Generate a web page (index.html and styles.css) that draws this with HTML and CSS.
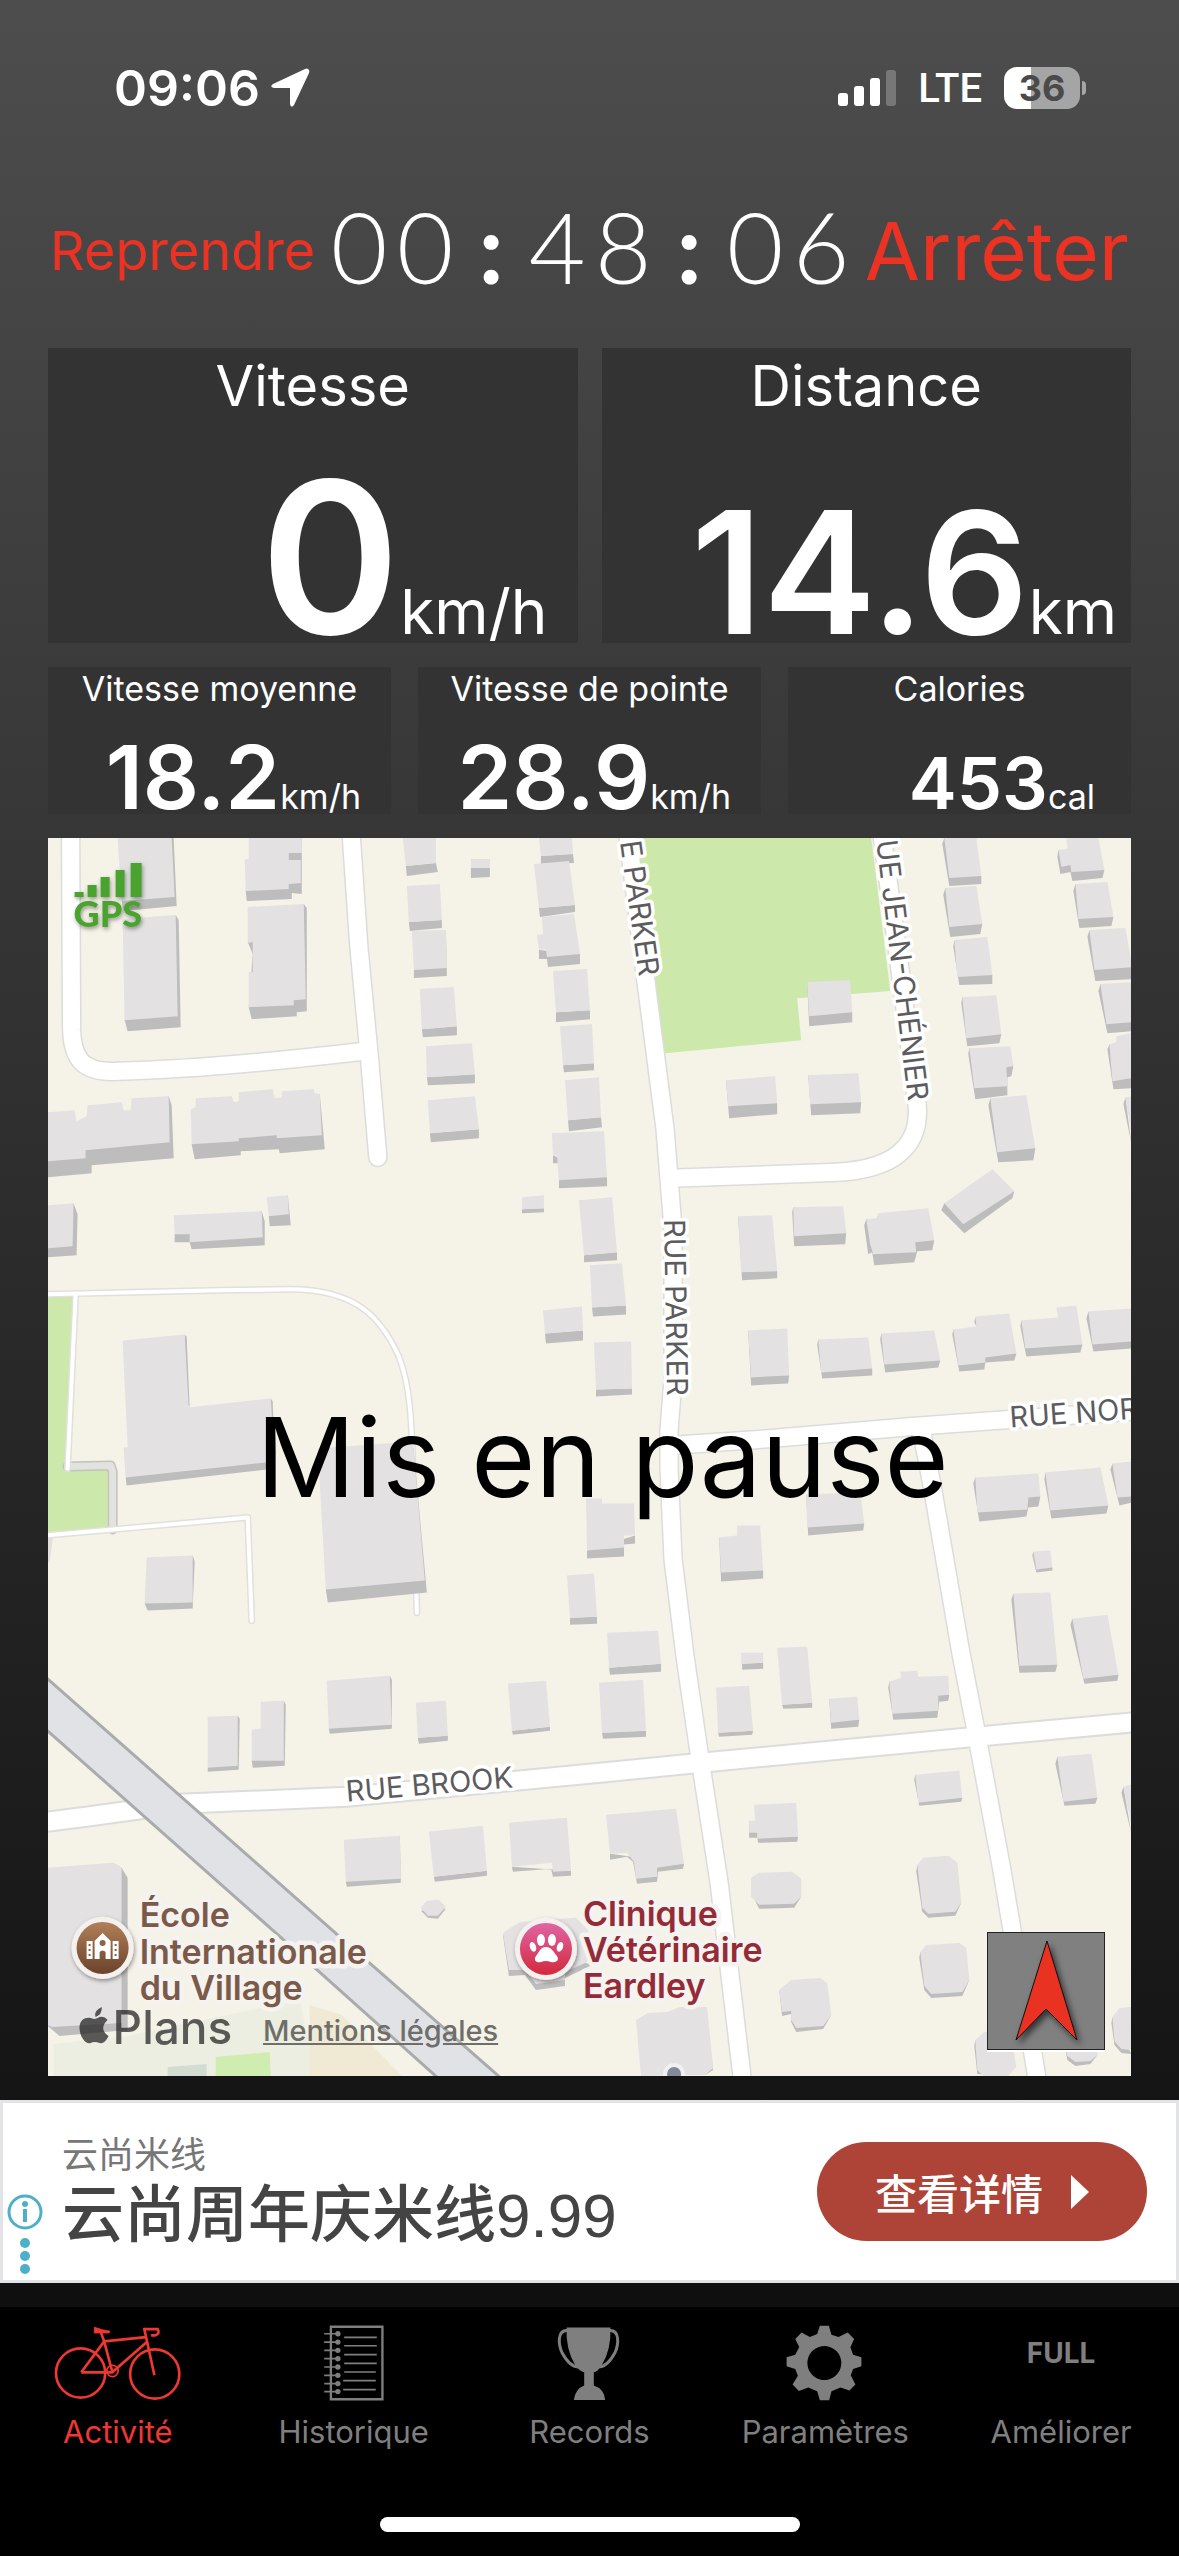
FILE: index.html
```html
<!DOCTYPE html>
<html lang="fr">
<head>
    <meta charset="UTF-8">
    <meta name="viewport" content="width=device-width, initial-scale=1.0">
    <title>Activité</title>
    <link rel="stylesheet" href="styles.css">
</head>
<body>
    <header class="status-bar">
        <div class="status-left">
            <span class="clock">09:06</span>
            <svg class="location" viewBox="0 0 40 40"><path d="M38 1 Q40 2 39 5 L24 37 Q21 41 20 36 L20 20 L4 20 Q-1 19 3 16 L35 1 Q37 0 38 1Z" fill="#fff"/></svg>
        </div>
        <div class="status-right">
            <svg class="signal" viewBox="0 0 58 38"><g fill="#fff"><rect x="0" y="24" width="10" height="13" rx="3"/><rect x="16" y="17" width="10" height="20" rx="3"/><rect x="32" y="9" width="10" height="28" rx="3"/><rect x="48" y="1" width="10" height="36" rx="3" fill="#777"/></g></svg>
            <span class="network">LTE</span>
            <div class="battery"><span>36</span></div>
        </div>
    </header>

    <div class="timer-bar">
        <button class="resume">Reprendre</button>
        <div class="timer"><span>0</span><span>0</span><span class="colon">:</span><span>4</span><span>8</span><span class="colon">:</span><span>0</span><span>6</span></div>
        <button class="stop">Arrêter</button>
    </div>

    <main class="content">
        <div class="cards main-cards">
            <section class="card speed">
                <h2>Vitesse</h2>
                <p><strong>0</strong><span>km/h</span></p>
            </section>
            <section class="card distance">
                <h2>Distance</h2>
                <p><strong>14.6</strong><span>km</span></p>
            </section>
        </div>
        <div class="cards small-cards">
            <section class="card">
                <h2>Vitesse moyenne</h2>
                <p><strong>18.2</strong><span>km/h</span></p>
            </section>
            <section class="card">
                <h2>Vitesse de pointe</h2>
                <p><strong>28.9</strong><span>km/h</span></p>
            </section>
            <section class="card calories">
                <h2>Calories</h2>
                <p><strong>453</strong><span>cal</span></p>
            </section>
        </div>

        <div class="map">
            <svg class="map-canvas" viewBox="48 839 1083 1237" preserveAspectRatio="xMidYMid slice">
                <defs>
                    <linearGradient id="school" x2="0" y2="1"><stop stop-color="#b08058"/><stop offset="1" stop-color="#6b432b"/></linearGradient>
                    <linearGradient id="vet" x2="0" y2="1"><stop stop-color="#e065a5"/><stop offset="1" stop-color="#d3293d"/></linearGradient>
                    <filter id="shadow" x="-30%" y="-30%" width="170%" height="170%"><feDropShadow dx="3" dy="4" stdDeviation="3" flood-opacity="0.6"/></filter>
                    <filter id="soft" x="-30%" y="-30%" width="160%" height="160%"><feDropShadow dx="1" dy="2" stdDeviation="2" flood-opacity="0.4"/></filter>
                </defs>
                <rect x="48" y="839" width="1083" height="1237" fill="#f5f2e8"/>

                <!-- parks and ground -->
                <g fill="#cce8aa">
                    <path d="M636 839H871L890 992 797 999 801 1041 665 1054Z"/>
                    <path d="M48 1295H75L67 1470H108V1530L48 1533Z"/>
                </g>
                <path d="M54 2044L128 2036 300 2000 316 2076H54Z" fill="#edeee2"/>
                <path d="M310 2005L342 2015 402 2076H310Z" fill="#f0ead4"/>
                <path d="M216 2057L270 2052 271 2076H216Z" fill="#cfedb0"/>
                <path d="M168 2067L207 2064V2076H168Z" fill="#d3dcd0"/>

                <!-- paths -->
                <g fill="none" stroke-linejoin="round" stroke-linecap="round">
                    <path d="M68 1467L111 1466 113 1472V1530" stroke="#c3c2bd" stroke-width="10"/>
                    <path d="M68 1467L111 1466 113 1472V1530" stroke="#e2e2de" stroke-width="7"/>
                    <g stroke="#e1e0dc" stroke-width="7">
                        <path d="M44 1295L220 1291 290 1290C360 1290 383 1322 399 1357C412 1390 412 1430 414 1500L417 1613"/>
                        <path d="M76 1296L68 1469"/>
                        <path d="M44 1536L248 1518 252 1621M50 1536L47 1560"/>
                    </g>
                    <g stroke="#fff" stroke-width="4">
                        <path d="M44 1295L220 1291 290 1290C360 1290 383 1322 399 1357C412 1390 412 1430 414 1500L417 1613"/>
                        <path d="M76 1296L68 1469"/>
                        <path d="M44 1536L248 1518 252 1621"/>
                    </g>
                </g>

                <!-- streets -->
                <g fill="none" stroke="#dcdcda" stroke-width="20">
                    <path d="M71 830L72 1030C73 1062 85 1074 119 1072Q210 1070 365 1052"/>
                    <path d="M351 830L359 947 370 1063 378 1158" stroke-linecap="round"/>
                    <path d="M627 830L646 983 665 1130 673 1230V1380L669 1430V1470L673 1560 685 1657 699 1753 719 1883 743 2086"/>
                    <path d="M881 830L901 980 917 1107C920 1150 890 1170 837 1173L670 1179"/>
                    <path d="M669 1446L759 1440 912 1427 1009 1420 1140 1411"/>
                    <path d="M921 1430L932 1487 960 1650 975 1728 1001 1867 1038 2086"/>
                    <path d="M40 1823L94 1816 180 1804 347 1797 600 1773 701 1763 976 1737 1140 1722" stroke-width="22"/>
                </g>
                <g fill="none" stroke="#fff" stroke-width="17">
                    <path d="M71 830L72 1030C73 1062 85 1074 119 1072Q210 1070 365 1052"/>
                    <path d="M351 830L359 947 370 1063 378 1158" stroke-linecap="round"/>
                    <path d="M627 830L646 983 665 1130 673 1230V1380L669 1430V1470L673 1560 685 1657 699 1753 719 1883 743 2086"/>
                    <path d="M881 830L901 980 917 1107C920 1150 890 1170 837 1173L670 1179"/>
                    <path d="M669 1446L759 1440 912 1427 1009 1420 1140 1411"/>
                    <path d="M921 1430L932 1487 960 1650 975 1728 1001 1867 1038 2086"/>
                    <path d="M40 1823L94 1816 180 1804 347 1797 600 1773 701 1763 976 1737 1140 1722" stroke-width="18"/>
                </g>
                <path d="M40 1672L340 1937 510 2086H447L276 1933 40 1724Z" fill="#e0e2e6" stroke="#aaabac" stroke-width="3"/>

                <!-- building walls -->
                <g fill="#bebdbd">
                    <path d="M172 839H174L177 907 124 912 122 902Z"/>
                    <path d="M176 916L179 921 181 1028 128 1032 125 1021Z"/>
                    <path d="M302 839V895L292 894V900L247 902 246 892 289 839Z"/>
                    <path d="M304 905L307 909V1012L297 1013V1017L252 1020 249 1008 253 955 248 943Z"/>
                    <path d="M436 864L438 873 407 877 406 867Z M471 869H490V878L471 879Z M442 921V929L410 932 409 923Z M446 931L447 977 414 979V971Z M457 1027V1036L423 1038 422 1030Z M475 1075V1084L428 1086 427 1078Z M479 1130V1139L431 1143 430 1134Z"/>
                    <path d="M573 855L574 864 541 865V857Z M575 906V913L540 918 539 909Z M580 955V965L548 968 547 960H539V951Z M590 1011V1020L556 1023V1013Z M594 1064V1071L564 1073 563 1066Z M601 1118L602 1128 569 1132 568 1121Z M607 1178V1187L559 1189V1164H553V1156Z M544 1209V1213L522 1214V1210Z M617 1253V1261L584 1263V1256Z"/>
                    <path d="M169 1097L172 1106 174 1159 92 1166V1174L48 1178V1162Z M320 1095L325 1150 280 1154 279 1150 241 1152V1156L195 1160 192 1145Z M74 1204L78 1215 77 1256 48 1258V1249Z M262 1212L265 1222V1246L192 1250 190 1243H175V1235Z M288 1196L291 1226 270 1227 269 1217Z"/>
                    <path d="M807 983L809 1027 852 1023V1013Z M726 1081L729 1119 777 1115V1104Z M808 1076L811 1116 860 1114 861 1103Z"/>
                    <path d="M944 839L942 845 949 887 981 885V877Z M945 889L943 896 950 938 980 935 982 925Z M954 941L953 948 959 986 992 985V976Z M962 998L961 1004 967 1047 999 1044 1001 1035Z M969 1049L968 1055 975 1100 1007 1096V1078L1011 1077 1013 1067Z M990 1099L988 1106 998 1163 1033 1161 1035 1149Z"/>
                    <path d="M1058 851L1057 858 1060 875 1070 873 1072 882 1102 879 1104 871Z M1075 885L1073 892 1079 929 1111 927 1113 918Z M1089 931L1087 938 1095 982 1131 980V968Z M1100 985L1098 992 1107 1034 1131 1032V1023Z M1109 1045L1107 1050 1113 1090 1131 1089V1079Z M1125 1098L1123 1105 1131 1145Z"/>
                    <path d="M944 1204L941 1211 964 1234 1012 1199 1014 1192Z M738 1217L742 1281 777 1279V1272Z M793 1208L792 1213 794 1247 845 1245 846 1234Z M866 1220L864 1226 868 1255 872 1253 874 1266 914 1263 917 1252 932 1251 934 1241Z"/>
                    <path d="M626 1306V1315L593 1317 592 1308Z M583 1331V1341L546 1344 545 1334Z M632 1389V1395L596 1397V1390Z M748 1331L751 1386 788 1384 789 1376Z M818 1340L817 1345 822 1379 872 1376V1369Z M881 1334L880 1340 885 1373 938 1368 940 1361Z M953 1330L952 1335 959 1372 984 1370 985 1363 1014 1361 1016 1354Z M975 1317L974 1323 978 1330Z M1021 1321L1020 1327 1026 1357 1080 1353 1082 1345Z M1088 1312L1086 1319 1093 1352 1131 1349V1342Z"/>
                    <path d="M975 1478L973 1484 979 1522 1026 1517 1028 1508 1038 1507 1040 1497Z M1045 1473L1044 1480 1051 1519 1106 1514 1108 1506Z M1112 1464L1110 1470 1119 1506 1131 1503V1497Z M806 1495L808 1536 863 1531 864 1524Z M719 1538L721 1582 763 1579V1571Z M635 1536V1544L624 1545V1557L587 1559V1551Z M597 1617V1624L570 1625V1618Z M1033 1552L1032 1556 1036 1573 1052 1571V1568Z M1013 1594L1011 1600 1019 1673 1055 1672 1057 1665Z M1072 1619L1070 1625 1084 1684 1117 1681 1118 1675Z M661 1664V1672L610 1675 609 1668Z M763 1663V1669L742 1670V1664Z M812 1703V1708L783 1709 782 1705Z"/>
                    <path d="M646 1731V1737L603 1739 602 1733Z M753 1731L752 1735 719 1737 718 1733Z M829 1699L831 1729 858 1727 859 1720Z M889 1682L888 1688 893 1720 937 1718 939 1702 948 1701 949 1695Z M915 1775L914 1780 919 1806 961 1802 962 1798Z M1057 1757L1055 1764 1064 1806 1095 1804 1097 1798Z M1123 1787L1121 1793 1131 1834Z M749 1821V1838H757L758 1843 797 1842 798 1837Z M684 1864L683 1869 658 1872 657 1882 637 1884 633 1862 627 1857 610 1860V1854Z"/>
                    <path d="M751 1893L759 1909 794 1908 801 1897Z M917 1865L916 1872 922 1912 928 1918 955 1916 961 1903Z M920 1952L919 1958 924 1990 931 1998 962 1996 969 1980Z M779 1990L782 2016 791 2014V2022L796 2032 823 2029 831 2015Z M975 2040L974 2046 977 2074 1008 2076Z M1065 2050L1067 2060 1075 2066 1090 2064 1097 2055Z M1112 2017L1111 2023 1114 2045 1121 2053 1131 2054Z"/>
                    <path d="M185 1335L187 1337 190 1408 186 1400Z M271 1399L273 1402 275 1469 127 1486 126 1478Z M413 1442L427 1593 328 1603 326 1590Z M193 1556L195 1562 193 1609 148 1611 145 1604Z"/>
                    <path d="M238 1716L240 1719 239 1770 208 1772V1768Z M284 1701L286 1705 285 1766 253 1768 252 1761Z M390 1676L392 1680V1729L330 1734 329 1729Z M448 1736V1741L419 1744 418 1738Z M550 1727V1731L513 1735 512 1731Z M400 1836L401 1883 347 1887 346 1882Z M487 1871V1876L435 1882 434 1877Z M571 1871V1876L553 1877 551 1869 513 1872 512 1867Z M446 1909L438 1919 428 1918 421 1911Z M113 1863L122 1868 128 1878V2030L60 2036 48 2026V2020Z M503 1935L509 1976 525 1975 536 1990 565 1986V1978L592 1965Z M705 2075L713 2070 712 2060Z"/>
                </g>

                <!-- building roofs -->
                <g fill="#e3e1e2">
                    <path d="M118 839H172L175 898 122 902Z M123 920L176 916 178 1017 125 1021Z M249 839H302V854H289V861H301V884L289 885V890L246 892 245 860H249Z M248 908L304 905 306 1000 294 1001V1006L249 1008V973H253V943L248 944Z"/>
                    <path d="M403 839H436V864L406 867Z M471 860H490V869H471Z M407 887L440 885 442 921 409 923Z M412 932L446 931 447 969 414 971Z M420 990L454 988 457 1027 422 1030Z M426 1047L472 1044 475 1075 427 1078Z M428 1101L475 1097 479 1130 430 1134Z"/>
                    <path d="M539 839H572L573 855 541 857Z M534 865L569 862 575 906 539 909Z M542 918L574 915 580 955 547 958 546 950 539 951 537 936 543 935Z M553 972L587 970 590 1011 556 1013Z M560 1027L592 1025 594 1064 563 1066Z M565 1081L599 1078 601 1118 568 1121Z M552 1134L604 1132 607 1178 559 1181 557 1156H553Z M522 1198L544 1196V1209L522 1210Z M579 1201L612 1198 617 1253 584 1256Z"/>
                    <path d="M48 1113L75 1111 77 1122 87 1117 88 1106 122 1103 124 1111H131L132 1099 169 1097 170 1143 86 1151V1159L48 1162Z M191 1110L196 1108V1099L232 1097 234 1103 239 1102V1093L273 1090 275 1099 282 1098V1092L314 1090 315 1094 320 1095 322 1136 277 1139V1136L239 1139V1142L192 1145Z M48 1206L74 1204 73 1247 48 1249Z M174 1216L262 1212 263 1238 190 1243V1235H175Z M267 1198L288 1196 289 1215 269 1217Z"/>
                    <path d="M807 983L850 981 852 1013 809 1017Z M726 1081L775 1077 777 1104 728 1107Z M808 1076L858 1074 861 1103 810 1105Z"/>
                    <path d="M944 839H976L981 877 949 879Z M945 889L976 887 982 925 949 928Z M954 941L987 938 992 976 957 978Z M962 998L996 996 1001 1035 966 1039Z M969 1049L1010 1047 1013 1067 1006 1068 1007 1087 974 1089Z M990 1099L1026 1096 1035 1149 997 1153Z M1066 839H1098L1104 871 1071 873 1070 866 1061 868 1058 851 1067 850Z M1075 885L1107 883 1113 918 1078 920Z M1089 931L1125 929 1132 968 1094 971Z M1100 985L1131 983V1023L1106 1025Z M1109 1045L1116 1043 1116 1037 1131 1034V1079L1112 1082Z M1125 1098L1131 1097V1135Z"/>
                    <path d="M944 1204L992 1170 1014 1192 963 1225Z M738 1217L772 1216 777 1272 741 1273Z M793 1208L843 1207 846 1234 794 1237Z M866 1220L876 1219 878 1214 928 1209 934 1241 915 1243 916 1253 873 1255 870 1245Z"/>
                    <path d="M590 1266L622 1264 626 1306 592 1308Z M543 1311L582 1307 583 1331 545 1334Z M594 1343L631 1342 632 1389 596 1390Z M748 1331L787 1329 789 1376 751 1378Z M818 1340L868 1338 872 1369 821 1373Z M881 1334L934 1331 940 1361 884 1365Z M953 1330L976 1327 975 1317 1009 1314 1016 1354 985 1358V1363L958 1366Z M1021 1321L1058 1318 1056 1308 1076 1306 1082 1345 1025 1349Z M1088 1312L1131 1309V1342L1092 1345Z"/>
                    <path d="M975 1478L1038 1474 1040 1497 1028 1498 1027 1510 977 1513Z M1045 1473L1100 1468 1108 1506 1050 1511Z M1112 1464L1131 1462V1497L1117 1498Z M806 1495L860 1493 864 1524 807 1528Z M719 1538L737 1536V1526H760L763 1571 721 1573Z M586 1499H602V1504H634L635 1536H624V1548L587 1551Z M567 1576L594 1574 597 1617 570 1618Z M1033 1552L1050 1551 1052 1568 1036 1570Z M1013 1594L1050 1593 1057 1665 1019 1666Z M1072 1619L1107 1615 1118 1675 1083 1679Z M607 1633L658 1631 661 1664 609 1668Z M741 1653H763V1663L741 1664Z M777 1648L807 1647 812 1703 782 1705Z"/>
                    <path d="M599 1683L643 1680 646 1731 602 1733Z M716 1688L749 1686 753 1731 718 1733Z M829 1699L857 1697 859 1720 831 1723Z M889 1682L901 1678 900 1672 917 1671 918 1677 948 1676 949 1695 938 1696V1711L892 1714Z M915 1775L959 1771 962 1798 918 1803Z M1057 1757L1091 1754 1097 1798 1063 1802Z M1123 1787L1131 1785V1825Z M754 1805L796 1803 798 1837 757 1839V1833H749V1821H755Z M606 1815L676 1809 684 1864 657 1868V1877L636 1879 634 1862 627 1853 610 1854Z"/>
                    <path d="M751 1878L759 1873 792 1872 801 1879V1897L794 1904 759 1905 751 1897Z M917 1865L923 1858 948 1856 957 1863 961 1903 955 1912 928 1914 922 1908Z M920 1952L926 1945 959 1943 966 1948 969 1980 962 1992 931 1994 924 1986Z M779 1990L791 1980 820 1978 827 1983 831 2015 823 2026 796 2028 791 2020V2011L782 2012Z M636 2020L648 2013 667 2012 680 2007H707L713 2068 705 2075 641 2076Z M975 2040L984 2032 1010 2030 1016 2067 1008 2076H983L977 2070Z M1065 2050H1097V2055L1090 2061 1075 2062 1067 2056Z M1112 2017L1119 2008 1131 2007V2050L1121 2049 1114 2041Z"/>
                    <path d="M123 1341L185 1335 189 1408 271 1399 275 1462 126 1478 124 1448H128Z M318 1449L413 1442 425 1581 326 1590Z M147 1558L193 1556V1603L145 1604Z"/>
                    <path d="M208 1717L238 1716V1766L208 1768Z M261 1702L284 1701V1761H252V1730L261 1729Z M327 1681L390 1676 392 1725 329 1729Z M416 1703L446 1701 448 1736 418 1738Z M508 1684L546 1681 550 1727 512 1731Z M344 1840L400 1836 401 1879 346 1882Z M429 1832L483 1826 487 1871 434 1877Z M509 1823L567 1818 571 1871 553 1872 552 1863 512 1867Z M421 1908L427 1901 439 1900 446 1907 438 1916H428Z M48 1868L113 1863 122 1868V2023L52 2027 48 2025Z M503 1933L520 1922 576 1918 588 1930 592 1960 565 1972V1980L536 1984 525 1970H509Z"/>
                </g>
                <circle cx="674" cy="2074" r="9" fill="#858a9b" stroke="#f1f1f1" stroke-width="4"/>

                <!-- street names -->
                <g class="street">
                    <text transform="translate(620 843) rotate(82)">E PARKER</text>
                    <text transform="translate(664 1220) rotate(89)">RUE PARKER</text>
                    <text transform="translate(876 842) rotate(83)">UE JEAN-CHÉNIER</text>
                    <text transform="translate(347 1802) rotate(-5)">RUE BROOK</text>
                    <text transform="translate(1010 1428) rotate(-4)">RUE NOR</text>
                </g>

                <!-- places -->
                <g filter="url(#soft)"><circle cx="103" cy="1948" r="31" fill="#f3f0ee"/><circle cx="546" cy="1949" r="31" fill="#f3f0ee"/></g>
                <circle cx="103" cy="1948" r="26" fill="url(#school)"/>
                <path fill="#fff" d="M87 1941H93V1959H87Z M113 1941H119V1959H113Z M95 1941L103 1933 111 1941V1959H106V1952Q103 1949 100 1952V1959H95Z"/>
                <g fill="#8f6240"><circle cx="103" cy="1943" r="3"/><path d="M89 1944h2v2h-2zm0 5h2v2h-2zm0 5h2v2h-2zM115 1944h2v2h-2zm0 5h2v2h-2zm0 5h2v2h-2z"/></g>
                <circle cx="546" cy="1949" r="26" fill="url(#vet)"/>
                <g fill="#fff">
                    <ellipse cx="541" cy="1940" rx="4" ry="6"/><ellipse cx="552" cy="1940" rx="4" ry="6"/>
                    <ellipse cx="533" cy="1947" rx="3" ry="5" transform="rotate(-20 533 1947)"/><ellipse cx="560" cy="1947" rx="3" ry="5" transform="rotate(20 560 1947)"/>
                    <path d="M546 1947C552 1947 554 1953 557 1956C560 1961 555 1963 551 1962Q546 1960 541 1962C537 1963 533 1961 536 1956C539 1953 540 1947 546 1947Z"/>
                </g>
                <g class="place brown">
                    <text x="140" y="1927">École</text>
                    <text x="140" y="1964">Internationale</text>
                    <text x="140" y="2000">du Village</text>
                </g>
                <g class="place red">
                    <text x="583" y="1926">Clinique</text>
                    <text x="583" y="1962">Vétérinaire</text>
                    <text x="583" y="1998">Eardley</text>
                </g>

                <!-- Plans logo -->
                <g fill="#1f1f1f" opacity="0.72">
                    <path d="M102 2007Q103 2014 96 2017Q94 2011 102 2007Z M108 2020C102 2025 102 2032 109 2036C106 2042 103 2044 100 2043Q95 2041 91 2043C85 2045 79 2034 80 2026C81 2018 88 2016 94 2019Q96 2019 98 2018Q104 2015 108 2020Z"/>
                    <text class="plans" x="113" y="2044">Plans</text>
                </g>

                <!-- GPS strength -->
                <g fill="#4aa32f" filter="url(#soft)">
                    <path d="M75 893h9v5h-9zM88 886h9v12h-9zM101 878h9v20h-9zM116 871h9v27h-9zM131 864h11v34h-11z"/>
                    <text class="gps" x="74" y="928">GPS</text>
                </g>
            </svg>
            <p class="paused">Mis en pause</p>
            <a class="legal" href="#">Mentions légales</a>
            <button class="compass" aria-label="Orientation">
                <svg viewBox="0 0 116 116"><path d="M59 8L89 107 58 76 28 107Z" fill="#e93323" stroke="#111" stroke-width="1" filter="url(#shadow)"/></svg>
            </button>
        </div>
    </main>

    <aside class="ad">
        <div class="ad-info">
            <svg viewBox="0 0 36 84"><circle cx="18" cy="19" r="16" fill="none" stroke="#4dafc8" stroke-width="3"/><g fill="#4dafc8"><circle cx="18" cy="11" r="3"/><rect x="16" y="16" width="4" height="13"/><circle cx="18" cy="50" r="5"/><circle cx="18" cy="63" r="5"/><circle cx="18" cy="76" r="5"/></g></svg>
        </div>
        <div class="ad-text">
            <p class="ad-name">云尚米线</p>
            <p class="ad-title">云尚周年庆米线9.99</p>
        </div>
        <button class="ad-button">查看详情<svg viewBox="0 0 18 34"><path d="M0 0L18 17 0 34Z" fill="#fff"/></svg></button>
    </aside>

    <nav class="tabs">
        <a href="#" class="active">
            <svg viewBox="5 40 400 240"><g fill="none" stroke="#ed3833" stroke-width="8"><circle cx="94" cy="190" r="74"/><circle cx="317" cy="193" r="74"/><path d="M155 68L165 95 189 185M165 95L290 82M96 188H189L295 95M96 188L165 95M285 55L316 197"/><path d="M283 58H326Q334 72 318 77L306 77"/><circle cx="190" cy="184" r="17" stroke-width="5"/><path d="M135 52V70H180L182 64 160 60Z" fill="#ed3833" stroke-width="2"/></g></svg>
            <span>Activité</span>
        </a>
        <a href="#">
            <svg viewBox="708 40 400 240"><g fill="none" stroke="#7f7f7f"><path d="M840 51H995V269H840Z" stroke-width="7"/><path d="M880 83H978M880 108H978M880 135H978M880 161H978M880 187H975M877 213H975M877 240H975M820 72H860M820 97H860M820 122H860M820 147H860M820 172H860M820 197H860M820 222H860M820 246H860" stroke-width="5"/></g><g fill="#7f7f7f"><circle cx="861" cy="72" r="8"/><circle cx="861" cy="97" r="8"/><circle cx="861" cy="122" r="8"/><circle cx="861" cy="147" r="8"/><circle cx="861" cy="172" r="8"/><circle cx="861" cy="197" r="8"/><circle cx="861" cy="222" r="8"/><circle cx="861" cy="246" r="8"/></g></svg>
            <span>Historique</span>
        </a>
        <a href="#">
            <svg viewBox="-52 40 400 240"><g fill="#7f7f7f"><path d="M79 53H211Q214 120 184 168Q172 186 161 188V228Q192 238 195 271H101Q106 238 132 228V188Q118 184 106 168Q76 120 79 53Z"/><path d="M82 62C50 60 54 105 66 130Q90 175 120 172M208 62C240 60 236 105 224 130Q200 175 170 172" fill="none" stroke="#7f7f7f" stroke-width="9"/></g></svg>
            <span>Records</span>
        </a>
        <a href="#">
            <svg viewBox="655 40 400 240"><path fill="#7f7f7f" fill-rule="evenodd" d="M838 48H865L873 75 894 82 922 68 941 88 930 113 938 135 963 143V170L938 178 931 197 945 225 927 243 900 234 873 245 866 272H838L830 245 803 234 775 244 756 225 772 198 764 178 738 170V143L764 135 776 112 764 88 783 68 808 82 830 73ZM851 109a51 51 0 1 0 1 0Z"/></svg>
            <span>Paramètres</span>
        </a>
        <a href="#">
            <b>FULL</b>
            <span>Améliorer</span>
        </a>
    </nav>
    <div class="home-bar"></div>
</body>
</html>
```
FILE: styles.css
```css
* {
    box-sizing: border-box;
}

body {
    margin: 0;
    min-height: 100vh;
    display: flex;
    flex-direction: column;
    background: linear-gradient(#4d4d4d, #0f0f0f 90%);
    color: #fff;
    font-family: Inter, "Liberation Sans", sans-serif;
}

h2,
p {
    margin: 0;
    font-weight: 400;
}

button {
    padding: 0;
    border: none;
    background: none;
    font-family: inherit;
    cursor: pointer;
}

/* status bar */
.status-bar {
    display: flex;
    justify-content: space-between;
    align-items: center;
    height: 176px;
    padding: 0 94px 0 114px;
}

.status-left,
.status-right {
    display: flex;
    align-items: center;
}

.clock {
    font-size: 50px;
    font-weight: 600;
}

.location {
    width: 40px;
    height: 40px;
    margin-left: 10px;
}

.signal {
    width: 58px;
    height: 38px;
}

.network {
    margin: 0 22px;
    font-family: Roboto, sans-serif;
    font-size: 40px;
    font-weight: 500;
}

.battery {
    position: relative;
    width: 76px;
    height: 42px;
    margin-right: 5px;
    border-radius: 13px;
    background: linear-gradient(90deg, #fff 36%, #a5a5a5 36%);
    color: #4a4a4a;
    font-size: 36px;
    font-weight: 700;
    line-height: 42px;
    text-align: center;
}

.battery::after {
    content: "";
    position: absolute;
    top: 14px;
    right: -6px;
    width: 4px;
    height: 14px;
    border-radius: 0 4px 4px 0;
    background: #a5a5a5;
}

/* timer */
.timer-bar {
    display: flex;
    justify-content: space-between;
    align-items: center;
    height: 148px;
    padding: 0 50px;
}

.resume,
.stop {
    color: #ec3323;
}

.resume {
    font-size: 54px;
}

.stop {
    font-size: 80px;
}

.timer {
    display: grid;
    grid-template-columns: repeat(8, 66px);
    padding-bottom: 8px;
    font-family: Lato, sans-serif;
    font-size: 98px;
    font-weight: 300;
    text-align: center;
}

.timer .colon {
    font-weight: 700;
}

/* cards */
.content {
    flex: 1;
    display: flex;
    flex-direction: column;
    gap: 24px;
    padding: 24px 48px;
}

.cards {
    display: flex;
    gap: 24px;
}

.card {
    flex: 1;
    display: flex;
    flex-direction: column;
    height: 295px;
    background: #333;
}

.card h2 {
    font-size: 56px;
    line-height: 76px;
    text-align: center;
}

.card p {
    display: flex;
    justify-content: flex-end;
    align-items: baseline;
    margin-top: auto;
    padding-right: 30px;
}

.card strong {
    font-size: 212px;
    font-weight: 600;
    line-height: 0.8;
}

.card span {
    font-size: 62px;
    line-height: 1;
}

.distance strong {
    font-size: 170px;
}

.distance p {
    padding-right: 14px;
}

.small-cards {
    gap: 27px;
}

.small-cards .card {
    height: 147px;
}

.small-cards h2 {
    font-size: 34px;
    line-height: 44px;
}

.small-cards strong {
    font-size: 88px;
}

.small-cards span {
    font-size: 34px;
}

.calories strong {
    font-size: 72px;
}

.calories p {
    padding-right: 36px;
}

/* map */
.map {
    position: relative;
    flex: 1;
    min-height: 600px;
    overflow: hidden;
    background: #f5f2e8;
}

.map-canvas {
    position: absolute;
    width: 100%;
    height: 100%;
}

.street text {
    fill: #5c5c5e;
    stroke: #fff;
    stroke-width: 7px;
    stroke-linejoin: round;
    paint-order: stroke;
    font-size: 29px;
    font-weight: 400;
}

.place text {
    stroke: #f4f3ef;
    stroke-width: 9px;
    stroke-linejoin: round;
    paint-order: stroke;
    font-size: 34px;
    font-weight: 600;
}

.brown text {
    fill: #7b5a4a;
}

.red text {
    fill: #942c38;
}

.plans {
    font-size: 46px;
    font-weight: 500;
}

.gps {
    font-family: Lato, sans-serif;
    font-size: 36px;
    font-weight: 900;
}

.paused {
    position: absolute;
    inset: 0;
    display: flex;
    justify-content: center;
    align-items: center;
    padding-left: 26px;
    color: #000;
    font-size: 110px;
}

.legal {
    position: absolute;
    left: 215px;
    bottom: 28px;
    color: #6e6e6a;
    font-size: 29px;
    font-weight: 500;
}

.compass {
    position: absolute;
    right: 26px;
    bottom: 26px;
    width: 118px;
    height: 118px;
    border: 1px solid #222;
    background: #808080;
    box-shadow: 0 2px 0 #fff;
}

.compass svg {
    display: block;
}

/* ad banner */
.ad {
    display: flex;
    align-items: center;
    height: 183px;
    padding-right: 29px;
    border: 3px solid #e2e3e5;
    background: #fff;
    font-family: "Liberation Sans", "Noto Sans CJK SC", sans-serif;
}

.ad-info {
    width: 59px;
    padding: 86px 0 0 4px;
}

.ad-info svg {
    display: block;
    width: 36px;
    height: 84px;
}

.ad-text {
    flex: 1;
}

.ad-name {
    color: #777;
    font-size: 36px;
    line-height: 48px;
}

.ad-title {
    color: #444;
    font-size: 62px;
    font-weight: 500;
    line-height: 72px;
}

.ad-button {
    display: flex;
    justify-content: center;
    align-items: center;
    gap: 28px;
    width: 330px;
    height: 99px;
    border-radius: 50px;
    background: #ae4337;
    color: #fff;
    font-size: 42px;
    font-weight: 500;
}

.ad-button svg {
    width: 18px;
    height: 34px;
}

/* tabs */
.tabs {
    display: flex;
    height: 210px;
    margin-top: 24px;
    padding-top: 16px;
    background: #000;
}

.tabs a {
    flex: 1;
    display: flex;
    flex-direction: column;
    align-items: center;
    color: #7f7f7f;
    font-size: 31px;
    line-height: 58px;
    text-decoration: none;
}

.tabs svg {
    width: 133px;
    height: 80px;
}

.tabs b {
    height: 80px;
    font-size: 28px;
    line-height: 60px;
}

.tabs .active {
    color: #ed3833;
}

.home-bar {
    height: 39px;
    background: #000;
}

.home-bar::before {
    content: "";
    display: block;
    width: 420px;
    height: 15px;
    margin: 0 auto;
    border-radius: 8px;
    background: #fff;
}
```
